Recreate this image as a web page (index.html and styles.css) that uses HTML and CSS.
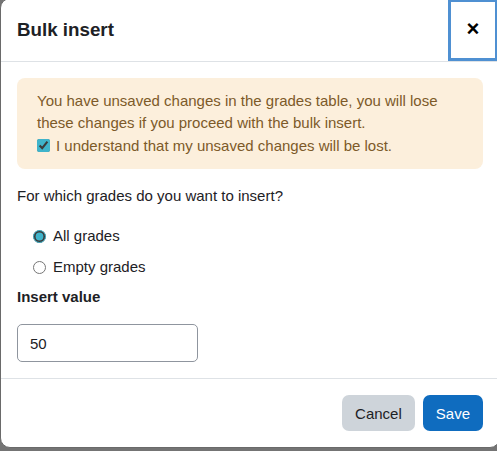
FILE: index.html
```html
<!DOCTYPE html>
<html lang="en">
  <head>
    <meta charset="UTF-8" />
    <meta name="viewport" content="width=device-width, initial-scale=1.0" />
    <title>Bulk insert</title>
    <link rel="stylesheet" href="styles.css">
  </head>
  <body>
    <div class="modal">
      <div class="modal-header">
        <h5 class="modal-title">Bulk insert</h5>
        <button class="close" type="button" aria-label="Close">×</button>
      </div>
      <div class="modal-body">
        <div class="alert">
          You have unsaved changes in the grades table, you will lose these changes if you proceed with the bulk insert.
          <label class="check">
            <input type="checkbox" checked /> I understand that my unsaved changes will be lost.
          </label>
        </div>
        <p class="question">For which grades do you want to insert?</p>
        <div class="radios">
          <label class="radio"><input type="radio" name="which" checked /> All grades</label>
          <label class="radio"><input type="radio" name="which" /> Empty grades</label>
        </div>
        <label class="field-label" for="value">Insert value</label>
        <input class="form-control" id="value" type="text" value="50" />
      </div>
      <div class="modal-footer">
        <button class="btn btn-secondary" type="button">Cancel</button>
        <button class="btn btn-primary" type="button">Save</button>
      </div>
    </div>
  </body>
</html>
```

FILE: styles.css
```css
* {
  margin: 0;
  padding: 0;
  box-sizing: border-box;
}
html,
body {
  height: 100%;
  overflow: hidden;
}
body {
  background: #747474;
  font-family: "Liberation Sans", Arial, sans-serif;
  font-size: 15px;
  line-height: 1.5;
  color: #1d2125;
}
.modal {
  width: 500px;
  height: 450px;
  margin-top: -2px;
  background: #fff;
  border: 1px solid #6a6a6a;
  border-radius: 10px;
  display: flex;
  flex-direction: column;
}
.modal-header {
  display: flex;
  align-items: stretch;
  height: 63px;
  border-bottom: 1px solid #dee2e6;
}
.modal-title {
  align-self: center;
  padding-left: 16px;
  font-size: 18.75px;
  font-weight: 700;
  line-height: 1.2;
}
.close {
  margin-left: auto;
  margin-right: 1px;
  width: 50px;
  background: #fff;
  border: 3px solid #4f90d2;
  font-family: "Liberation Sans", Arial, sans-serif;
  font-size: 22px;
  font-weight: 700;
  line-height: 1;
  color: #000;
  padding-bottom: 1px;
}
.modal-body {
  padding: 16px;
}
.alert {
  background: #fcefdc;
  color: #7d5a29;
  border-radius: 8px;
  padding: 12px 20px;
}
.check {
  display: flex;
  align-items: center;
  gap: 6px;
}
.check input {
  width: 13px;
  height: 13px;
  accent-color: #3fb4cb;
}
.question {
  margin-top: 16px;
}
.radios {
  margin-top: 13px;
  padding-left: 16px;
}
.radio {
  display: flex;
  align-items: center;
  gap: 7px;
  height: 31px;
}
.radio input {
  width: 13px;
  height: 13px;
  accent-color: #3fb4cb;
}
.field-label {
  display: block;
  margin-top: 3px;
  font-weight: 700;
}
.form-control {
  display: block;
  margin-top: 16px;
  width: 181px;
  height: 38px;
  padding: 0 12px;
  border: 1px solid #8f959e;
  border-radius: 5px;
  font-family: inherit;
  font-size: 15px;
  color: #1d2125;
}
.modal-footer {
  display: flex;
  justify-content: flex-end;
  gap: 8px;
  border-top: 1px solid #dee2e6;
  padding: 16px;
}
.btn {
  height: 36px;
  padding: 0 13px;
  border: 0;
  border-radius: 7px;
  font-family: inherit;
  font-size: 15px;
}
.btn-secondary {
  background: #ced4da;
  color: #1d2125;
}
.btn-primary {
  background: #0f6cbf;
  color: #fff;
}
```
